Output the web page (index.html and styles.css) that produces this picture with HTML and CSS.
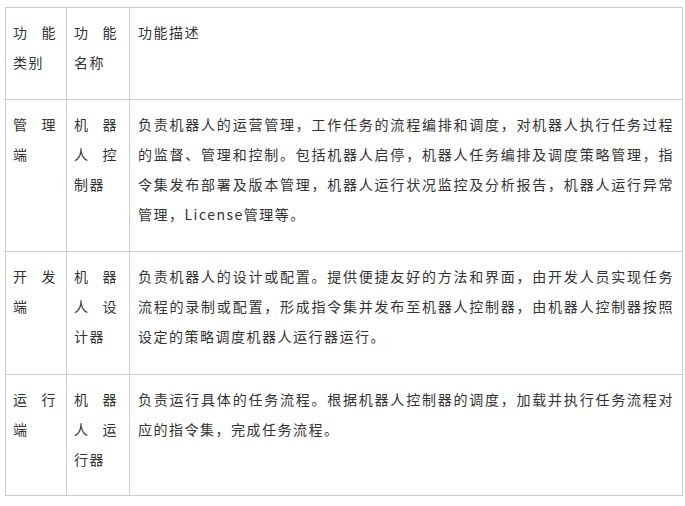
FILE: index.html
```html
<!DOCTYPE html>
<html lang="zh-CN">
<head>
<meta charset="utf-8">
<title>功能说明</title>
<link rel="stylesheet" href="styles.css">
</head>
<body>
<table class="spec">
  <colgroup>
    <col class="c-type">
    <col class="c-name">
    <col class="c-desc">
  </colgroup>
  <tr class="head">
    <td class="type">功能类别</td>
    <td class="name">功能名称</td>
    <td class="desc">功能描述</td>
  </tr>
  <tr class="r1">
    <td class="type">管理端</td>
    <td class="name">机器人控制器</td>
    <td class="desc">负责机器人的运营管理，工作任务的流程编排和调度，对机器人执行任务过程的监督、管理和控制。包括机器人启停，机器人任务编排及调度策略管理，指令集发布部署及版本管理，机器人运行状况监控及分析报告，机器人运行异常管理，License管理等。</td>
  </tr>
  <tr class="r2">
    <td class="type">开发端</td>
    <td class="name">机器人设计器</td>
    <td class="desc">负责机器人的设计或配置。提供便捷友好的方法和界面，由开发人员实现任务流程的录制或配置，形成指令集并发布至机器人控制器，由机器人控制器按照设定的策略调度机器人运行器运行。</td>
  </tr>
  <tr class="r3">
    <td class="type">运行端</td>
    <td class="name">机器人运行器</td>
    <td class="desc">负责运行具体的任务流程。根据机器人控制器的调度，加载并执行任务流程对应的指令集，完成任务流程。</td>
  </tr>
</table>
</body>
</html>
```
FILE: styles.css
```css
html, body {
  margin: 0;
  padding: 0;
  background: #ffffff;
}

body {
  font-family: "Noto Sans CJK SC", "Noto Sans", sans-serif;
  font-size: 14px;
  color: #333333;
}

.spec {
  margin: 7px 0 0 5px;
  width: 677px;
  table-layout: fixed;
  border-collapse: collapse;
}

.c-type { width: 61px; }
.c-name { width: 63px; }
.c-desc { width: 553px; }

.spec td {
  border: 1px solid #cccccc;
  vertical-align: top;
  line-height: 30px;
  letter-spacing: 1.5px;
  text-align: justify;
  padding-top: 9px;
  padding-bottom: 22px;
  word-break: break-all;
}

.spec .r2 td {
  padding-bottom: 23px;
}

.spec .r3 td {
  padding-bottom: 21px;
}

.spec .type {
  padding-left: 7px;
  padding-right: 9px;
}

.spec .name {
  padding-left: 7px;
  padding-right: 11px;
}

.spec .desc {
  padding-left: 8px;
  padding-right: 8px;
}
```
